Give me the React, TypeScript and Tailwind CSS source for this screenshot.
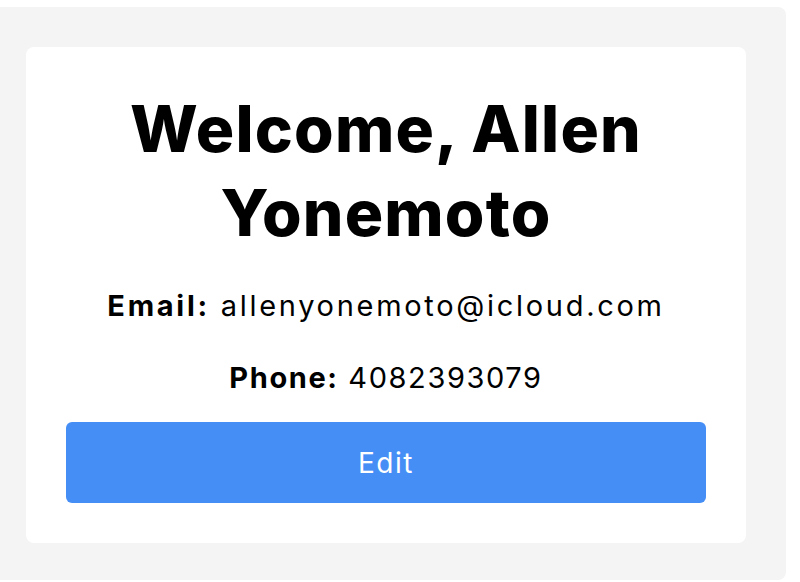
export default function App() {
  return (
    <div className="min-h-[582px] w-[800px] overflow-hidden bg-white pt-[7px] font-['Inter',sans-serif] text-black">
      <div className="-ml-[14px] h-[573px] w-[800px] rounded-lg bg-[#f4f4f4] p-10">
        <div className="rounded-lg bg-white p-10 text-center">
          <h1 className="text-[64px] font-extrabold leading-[84px] tracking-[1.2px]">Welcome, Allen Yonemoto</h1>
          <p className="mt-[30px] text-[29px] leading-[42px] tracking-[2.7px]">
            <span className="font-bold">Email:</span> allenyonemoto@icloud.com
          </p>
          <p className="mt-[30px] text-[29px] leading-[42px] tracking-[1.6px]">
            <span className="font-bold">Phone:</span> 4082393079
          </p>
          <button className="mt-[23px] h-[81px] w-full rounded-md bg-[#448ef6] text-[28px] tracking-[1.5px] text-white">
            Edit
          </button>
        </div>
      </div>
    </div>
  );
}
